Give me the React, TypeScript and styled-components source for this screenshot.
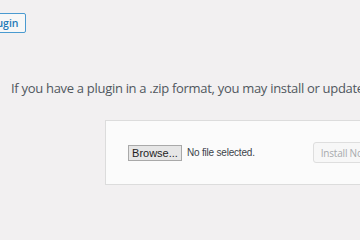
import React from "react";
import styled, { createGlobalStyle } from "styled-components";

const Global = createGlobalStyle`
  html, body { margin: 0; padding: 0; }
  body {
    background: #f2f0f1;
    font-family: "Open Sans", "Noto Sans", sans-serif;
    width: 360px;
    height: 240px;
    overflow: hidden;
  }
`;

const Page = styled.div`
  display: flex;
  flex-direction: column;
  padding-top: 13px;
  width: 460px;
`;

const TitleRow = styled.div`
  display: flex;
  align-items: center;
  margin-left: -59px;
  height: 20px;
`;

const ActionButton = styled.button`
  box-sizing: border-box;
  height: 20px;
  padding: 0 6px;
  border: 1px solid #4a9ad0;
  border-radius: 2px;
  background: #f7f7f7;
  color: #1f7ab8;
  font-family: "Open Sans", sans-serif;
  font-size: 10.5px;
  font-weight: 600;
  line-height: 18px;
  white-space: nowrap;
`;

const Description = styled.p`
  margin: 45px 0 0 11px;
  color: #50575e;
  font-family: "Open Sans", sans-serif;
  font-size: 13px;
  letter-spacing: -0.3px;
  line-height: 20px;
  white-space: nowrap;
`;

const UploadCard = styled.form`
  box-sizing: border-box;
  margin: 22px 0 0 105px;
  width: 320px;
  height: 65px;
  background: #fbfbfb;
  border: 1px solid #dcdcdc;
  display: flex;
  align-items: center;
  padding-left: 22px;
`;

const FilePicker = styled.div`
  display: flex;
  align-items: center;
  gap: 5px;
`;

const BrowseButton = styled.span`
  box-sizing: border-box;
  height: 16px;
  width: 54px;
  display: flex;
  align-items: center;
  justify-content: center;
  background: #e6e6e6;
  border: 1px solid #a9a9a9;
  color: #1e1e1e;
  font-family: "Liberation Sans", Arial, sans-serif;
  font-size: 11px;
`;

const FileName = styled.span`
  color: #3c434a;
  font-family: "Liberation Sans", Arial, sans-serif;
  font-size: 10px;
  letter-spacing: -0.2px;
`;

const InstallButton = styled.button`
  box-sizing: border-box;
  margin-left: 58px;
  height: 21px;
  padding: 0 7px;
  background: #f7f7f7;
  border: 1px solid #dedede;
  border-radius: 3px;
  color: #a7aaad;
  font-family: "Open Sans", sans-serif;
  font-size: 10px;
  letter-spacing: -0.2px;
  white-space: nowrap;
`;

export default function App() {
  return (
    <>
      <Global />
      <Page>
        <TitleRow>
          <ActionButton type="button">Upload Plugin</ActionButton>
        </TitleRow>
        <Description>
          If you have a plugin in a .zip format, you may install or update it by uploading it here.
        </Description>
        <UploadCard>
          <FilePicker>
            <BrowseButton>Browse...</BrowseButton>
            <FileName>No file selected.</FileName>
          </FilePicker>
          <InstallButton type="button" disabled>
            Install Now
          </InstallButton>
        </UploadCard>
      </Page>
    </>
  );
}
